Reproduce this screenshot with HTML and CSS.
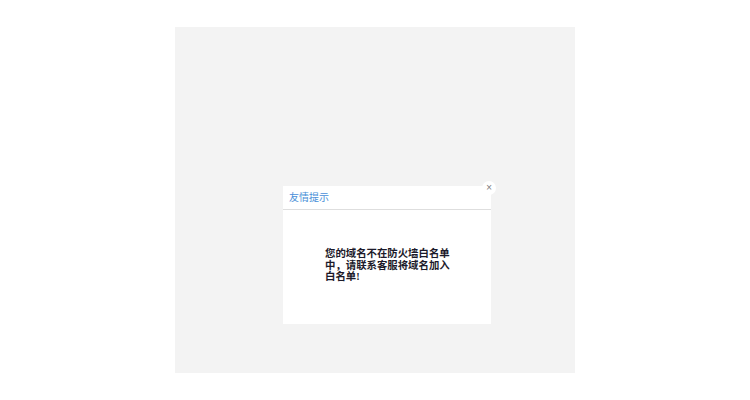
FILE: index.html
```html
<!DOCTYPE html>
<html lang="zh">
<head>
<meta charset="utf-8">
<link rel="stylesheet" href="styles.css">
</head>
<body>
<div class="panel">
  <div class="dialog">
    <div class="dialog-head">友情提示</div>
    <div class="dialog-body">
      <p class="msg">您的域名不在防火墙白名单中，请联系客服将域名加入白名单!</p>
    </div>
    <span class="close">×</span>
  </div>
</div>
</body>
</html>
```
FILE: styles.css
```css
html, body {
  margin: 0;
  padding: 0;
  background: #ffffff;
}
body {
  font-family: "Liberation Sans", "Noto Sans CJK SC", sans-serif;
}
.panel {
  margin: 27px 0 0 175px;
  width: 400px;
  height: 346px;
  box-sizing: border-box;
  background: #f3f3f3;
  padding: 159px 0 0 108px;
}
.dialog {
  position: relative;
  width: 208px;
  height: 138px;
  background: #ffffff;
}
.dialog-head {
  height: 24px;
  box-sizing: border-box;
  border-bottom: 1px solid #dedede;
  padding-left: 6px;
  font-size: 10px;
  line-height: 22px;
  color: #4a8fd8;
  font-family: "Noto Sans CJK SC", sans-serif;
}
.dialog-body {
  padding: 38px 0 0 42px;
}
.msg {
  margin: 0;
  width: 128px;
  font-family: "Liberation Serif", "Noto Sans CJK SC", serif;
  font-weight: bold;
  font-size: 10.4px;
  line-height: 11.7px;
  color: #1c1a2a;
}
.close {
  position: absolute;
  top: -5px;
  right: -5px;
  width: 14px;
  height: 14px;
  border-radius: 50%;
  background: #ffffff;
  color: #777;
  font-size: 8px;
  line-height: 14px;
  text-align: center;
  font-family: "DejaVu Sans", sans-serif;
}
```
